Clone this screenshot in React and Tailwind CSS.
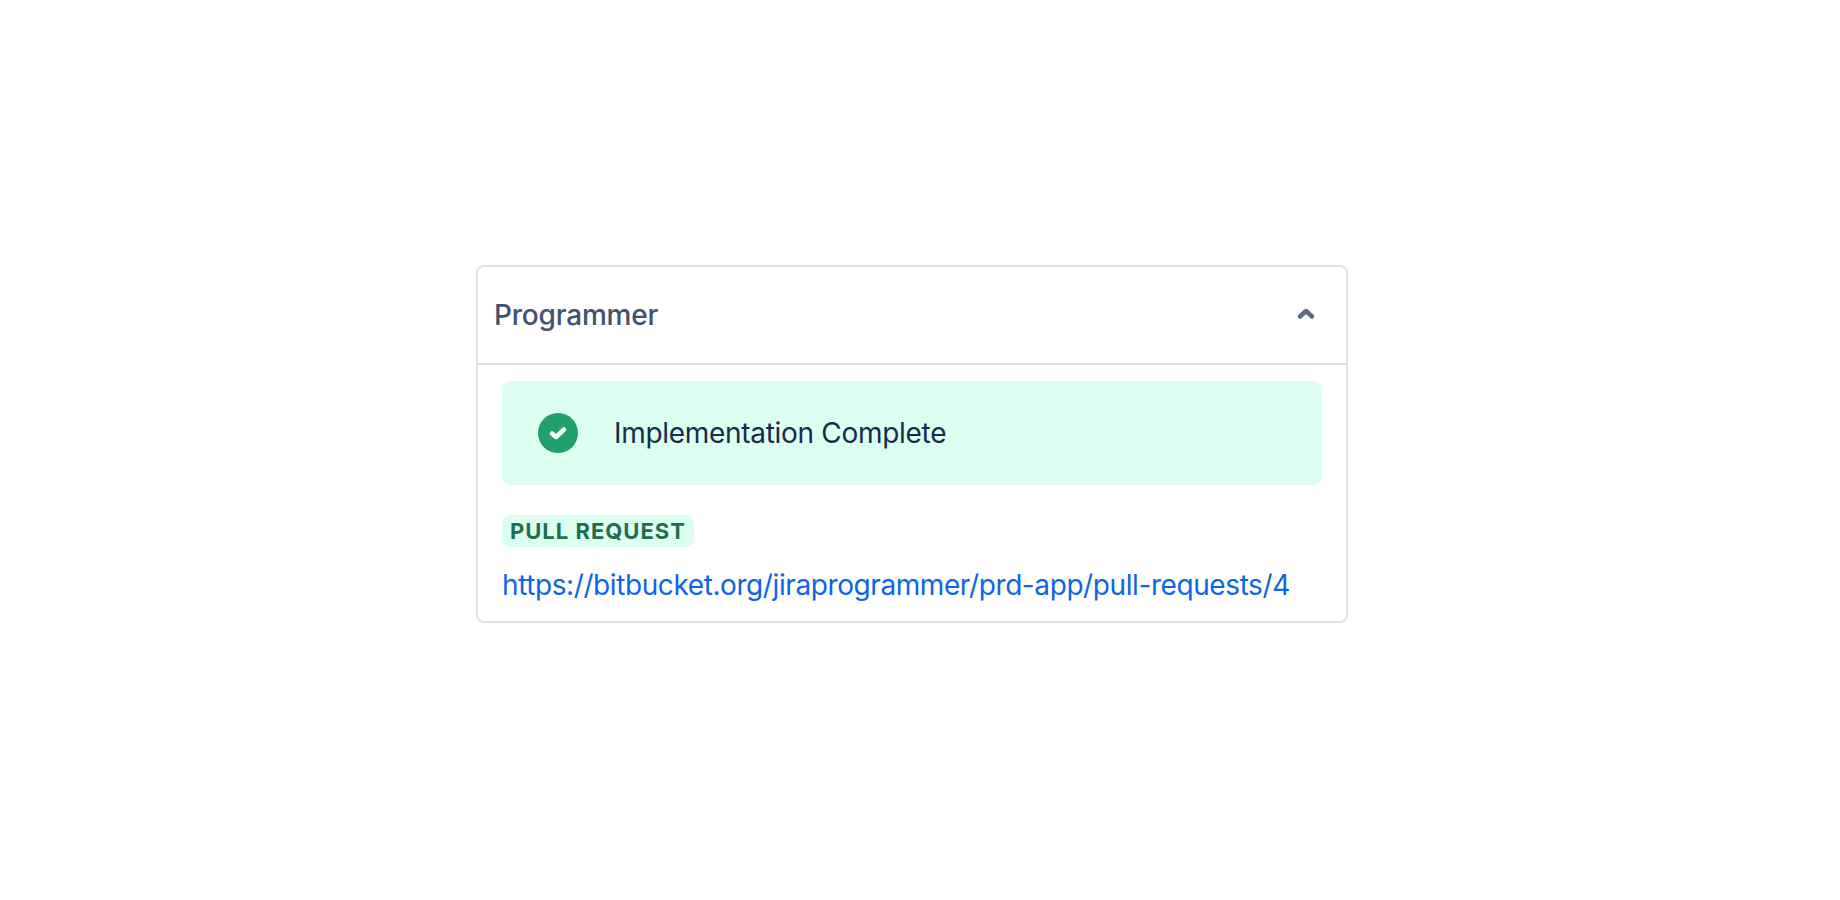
export default function App() {
  return (
    <div className="min-h-[900px] bg-white pt-[265px] pl-[476px]" style={{ fontFamily: '"Inter", sans-serif' }}>
      <div className="w-[872px] h-[358px] border-2 border-[#dfdfe6] rounded-[8px] bg-white">
        <div className="h-[98px] border-b-2 border-[#dfdfe6] flex items-center justify-between pl-[16px] pr-[28px]">
          <span className="text-[28px] font-medium tracking-[-0.2px] text-[#42526e]">Programmer</span>
          <svg width="24" height="24" viewBox="0 0 24 24" fill="none" className="text-[#5e6c84]">
            <path d="M6 13.5 L12 8 L18 13.5" stroke="currentColor" strokeWidth="4.5" strokeLinecap="round" strokeLinejoin="round" />
          </svg>
        </div>
        <div className="pt-[16px] pl-[24px] pr-[24px]">
          <div className="h-[104px] bg-[#dcfff1] rounded-[8px] flex items-center pl-[36px]">
            <svg width="40" height="40" viewBox="0 0 40 40">
              <circle cx="20" cy="20" r="20" fill="#22a06b" />
              <path d="M14 20.5 L18 24 L26 16.5" fill="none" stroke="#fff" strokeWidth="4.5" strokeLinecap="round" strokeLinejoin="round" />
            </svg>
            <span className="ml-[36px] text-[28px] tracking-[-0.3px] text-[#172b4d]">Implementation Complete</span>
          </div>
          <div className="mt-[30px] inline-flex h-[32px] items-center px-[8px] bg-[#dcfff1] rounded-[8px] text-[22px] font-bold tracking-[1px] text-[#216e4e]">PULL REQUEST</div>
          <div className="mt-[17px]">
            <a className="text-[28px] tracking-[-0.41px] text-[#0c66e4]">https://bitbucket.org/jiraprogrammer/prd-app/pull-requests/4</a>
          </div>
        </div>
      </div>
    </div>
  );
}
